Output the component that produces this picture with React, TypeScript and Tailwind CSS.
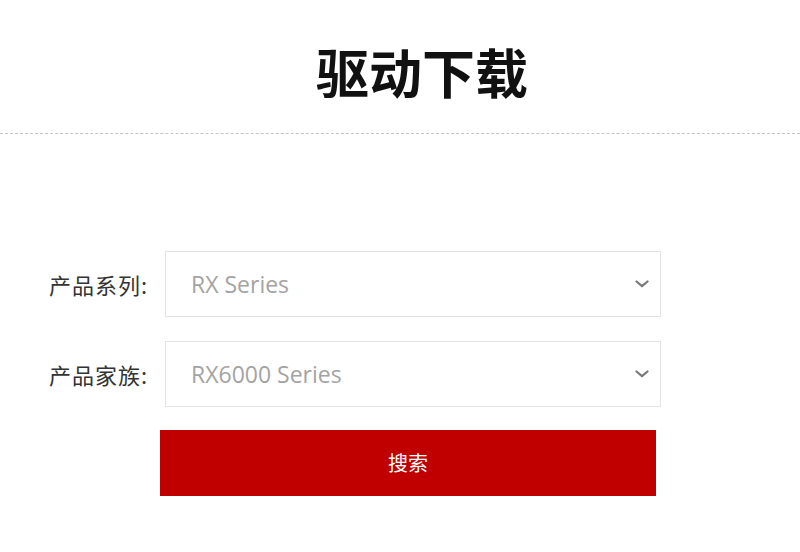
import React from 'react';

const cjk = '"Noto Sans CJK SC", "Noto Sans", sans-serif';

const Chevron: React.FC = () => (
  <svg width="14" height="8" viewBox="0 0 14 8" fill="none" aria-hidden="true">
    <polyline points="1.5,1.5 7,6.2 12.5,1.5" stroke="#7a7a7a" strokeWidth="2.2" strokeLinecap="round" strokeLinejoin="round" />
  </svg>
);

const SelectRow: React.FC<{ label: string; value: string }> = ({ label, value }) => (
  <div className="flex items-center">
    <label className="w-[165px] pl-[49px] text-[22px] text-[#333] leading-none tracking-[1px]" style={{ fontFamily: cjk }}>
      {label}
    </label>
    <div className="flex items-center justify-between w-[496px] h-[66px] border border-[#e3e3e3] bg-white pl-[25px] pr-[11px]">
      <span className="text-[23px] text-[#a3a3a3] leading-none" style={{ fontFamily: '"Open Sans", sans-serif' }}>
        {value}
      </span>
      <Chevron />
    </div>
  </div>
);

export default function App() {
  return (
    <div className="w-[800px] h-[552px] bg-white overflow-hidden">
      <div className="h-[133px] flex items-center justify-center pt-[10px] pl-[44px]">
        <h1 className="text-[53px] font-bold text-[#111] leading-none" style={{ fontFamily: cjk }}>
          驱动下载
        </h1>
      </div>
      <div className="border-t border-dashed border-[#c4c4c4]" />
      <div className="pt-[117px] flex flex-col gap-[24px]">
        <SelectRow label="产品系列:" value="RX Series" />
        <SelectRow label="产品家族:" value="RX6000 Series" />
      </div>
      <div className="pl-[160px] pt-[23px]">
        <button
          className="w-[496px] h-[66px] bg-[#c00000] text-white text-[20px] leading-none"
          style={{ fontFamily: cjk }}
        >
          搜索
        </button>
      </div>
    </div>
  );
}
